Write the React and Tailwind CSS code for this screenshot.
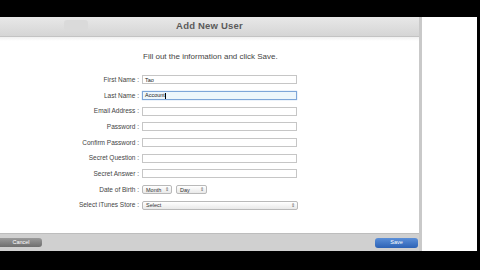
import React from 'react';

const rows = [
  { label: 'First Name :', value: 'Tao' },
  { label: 'Last Name :', value: 'Account', focused: true },
  { label: 'Email Address :' },
  { label: 'Password :' },
  { label: 'Confirm Password :' },
  { label: 'Secret Question :' },
  { label: 'Secret Answer :' },
];

const Arrows = () => (
  <span className="ml-auto pr-[2px] text-[5px] leading-none text-[#666]">⇕</span>
);

const SelectBox = ({ text, className }) => (
  <div className={`flex items-center h-[9px] pl-[3px] border border-[#b9b9b9] rounded-[2px] bg-gradient-to-b from-white to-[#e9e9e9] text-[5.5px] text-[#333] ${className}`}>
    <span>{text}</span>
    <Arrows />
  </div>
);

const App = () => {
  return (
    <div className="w-[480px] h-[270px] bg-black flex flex-col" style={{ fontFamily: '"Liberation Sans", Arial, sans-serif' }}>
      <div className="h-[17px]" />

      <div className="h-[234px] flex">
        {/* dialog */}
        <div className="w-[422px] flex flex-col border-r-[3px] border-[#c9c9c9] bg-white">
          {/* title bar */}
          <div className="h-[20px] relative flex items-center justify-center bg-gradient-to-b from-[#e8e8e8] to-[#d5d5d5] border-b border-[#c3c3c3]">
            <div className="absolute left-[64px] top-[3px] w-[24px] h-[11px] rounded-[3px] bg-[#dadada]" />
            <span className="text-[9.5px] font-bold text-[#5a5a5a] tracking-[0.2px]">Add New User</span>
          </div>

          {/* content */}
          <div className="flex-1 flex flex-col bg-gradient-to-b from-[#f0f0f0] to-white to-[4px]">
            <div className="pt-[15px] pl-[143px] text-[8px] leading-[10px] text-[#444]">Fill out the information and click Save.</div>

            <div className="mt-[10px] flex flex-col">
              {rows.map((r) => (
                <div key={r.label} className="h-[15.7px] flex items-center">
                  <div className="w-[140px] pr-[1px] text-right text-[6.5px] text-[#444]">{r.label}</div>
                  <div
                    className={`ml-[2px] w-[155px] h-[9px] flex items-center pl-[2px] text-[5.5px] text-[#222] border ${
                      r.focused ? 'border-[#7ea6d8] bg-[#edf6fb] shadow-[0_0_1px_#8fb6e6]' : 'border-[#c6c6c6] bg-white'
                    }`}
                  >
                    {r.value}
                    {r.focused && <span className="w-px h-[6px] bg-black" />}
                  </div>
                </div>
              ))}

              <div className="h-[15.7px] flex items-center">
                <div className="w-[140px] pr-[1px] text-right text-[6.5px] text-[#444]">Date of Birth :</div>
                <SelectBox text="Month" className="ml-[2px] w-[30px]" />
                <SelectBox text="Day" className="ml-[4px] w-[31px]" />
              </div>

              <div className="h-[15.7px] flex items-center">
                <div className="w-[140px] pr-[1px] text-right text-[6.5px] text-[#444]">Select iTunes Store :</div>
                <SelectBox text="Select" className="ml-[2px] w-[156px]" />
              </div>
            </div>
          </div>

          {/* bottom bar */}
          <div className="h-[18px] flex items-center justify-between bg-[#d0d0d0] border-t border-[#bdbdbd]">
            <button className="w-[42px] h-[9px] rounded-r-[3px] bg-gradient-to-b from-[#9a9a9a] to-[#6e6e6e] text-white text-[5.5px] leading-none flex items-center justify-center">
              Cancel
            </button>
            <button className="mr-[1px] w-[43px] h-[10px] rounded-[3px] bg-gradient-to-b from-[#5b8fd8] to-[#2c62b5] text-white text-[5.5px] leading-none flex items-center justify-center">
              Save
            </button>
          </div>
        </div>

        <div className="w-[55px] bg-white" />
        <div className="flex-1 bg-black" />
      </div>
    </div>
  );
};

export default App;
